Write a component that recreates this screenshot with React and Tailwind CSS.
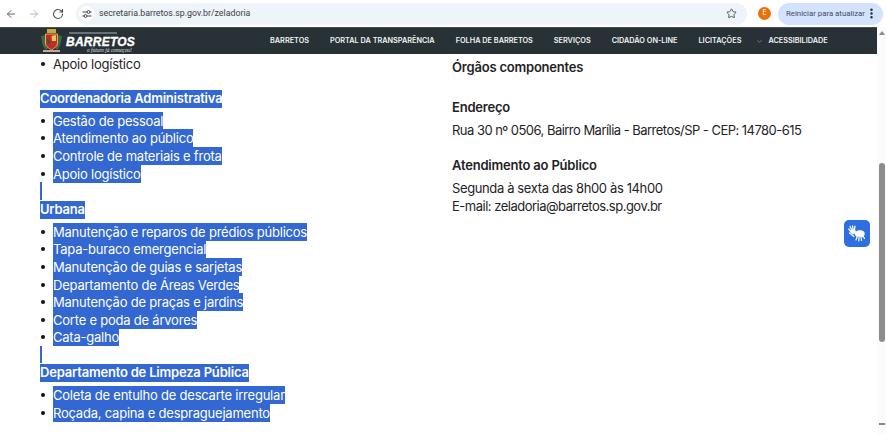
import React from "react";
import { ArrowLeft, ArrowRight, RotateCw, Star, EllipsisVertical, ChevronDown } from "lucide-react";

const font = { fontFamily: '"Inter", "Noto Sans", sans-serif' };

function Sel({ children }) {
  return (
    <div className="h-[17.5px] leading-[17.5px]">
      <span className="inline-block h-[18px] whitespace-nowrap bg-[#3367d1] text-[13px] font-semibold tracking-[-0.2px] text-white">{children}</span>
    </div>
  );
}

function SelList({ items }) {
  return (
    <ul className="flex flex-col">
      {items.map((t) => (
        <li key={t} className="flex h-[17.6px] items-center">
          <span className="ml-[1px] mr-[8px] h-[4px] w-[4px] rounded-full bg-[#111]" />
          <span className="inline-block h-[18px] whitespace-nowrap bg-[#3367d1] text-[13px] leading-[18px] tracking-[-0.22px] text-white">{t}</span>
        </li>
      ))}
    </ul>
  );
}

function Stub({ tall }) {
  return <div className={tall ? "h-[18px] w-[2px] bg-[#3367d1]" : "h-[17px] w-[2px] bg-[#3367d1]"} />;
}

const nav = ["BARRETOS", "PORTAL DA TRANSPARÊNCIA", "FOLHA DE BARRETOS", "SERVIÇOS", "CIDADÃO ON-LINE", "LICITAÇÕES"];

function Logo() {
  return (
    <svg width="94" height="26" viewBox="0 0 94 26" className="block shrink-0">
      <path d="M0 8 C1 12 1 19 5 22 L7 20 L5 7 Z" fill="#3c6a48" />
      <path d="M21 8 C20 12 20 19 16 22 L14 20 L16 7 Z" fill="#3c6a48" />
      <rect x="6" y="1" width="9" height="4" fill="#c9a93f" />
      <path d="M4.5 6 H16.5 V15 C16.5 19 13 20 10.5 22 C8 20 4.5 19 4.5 15 Z" fill="#c9282a" stroke="#d9c25c" strokeWidth="0.9" />
      <path d="M10.5 8 L15 7 V13 H11 Z" fill="#e6c94d" />
      <path d="M6 10 L10 14 L7 17 Z" fill="#2f5a3a" />
      <rect x="2" y="22" width="17" height="2" fill="#c9a6a0" />
      <rect x="28" y="4.5" width="48" height="1" fill="#aeb2b2" />
      <text x="25" y="17.5" fontFamily='"Liberation Sans", sans-serif' fontSize="12" fontWeight="700" fontStyle="italic" fill="#fff" stroke="#fff" strokeWidth="0.35" letterSpacing="0.25">BARRETOS</text>
      <text x="46" y="24" fontFamily='"Liberation Serif", serif' fontSize="5.4" fontStyle="italic" fill="#e2e2e2">o futuro já começou!</text>
    </svg>
  );
}

function Hands() {
  return (
    <svg width="18" height="17" viewBox="0 0 18 17" fill="none" stroke="#fff" strokeLinecap="round">
      <path d="M2 1.5 L4 5 M4.5 0.8 L5.2 4.5 M7 1.2 L6.5 5 M0.8 4 L3 6.5" strokeWidth="1.3" />
      <path d="M3.5 5.5 L7 5 L7.5 8 L4.5 9 L2.5 7 Z" fill="#fff" strokeWidth="0.8" />
      <path d="M1.5 8 L6 11.5" strokeWidth="1.2" />
      <path d="M7.5 7 C10 5 14 5 16 7 C17 9 16 11 14.5 12 L8.5 11.5 C7 10 6.5 8.5 7.5 7 Z" fill="#fff" strokeWidth="0.6" />
      <path d="M9 12 L8 15 M11 12.5 L10.8 16 M13 12.5 L13.6 15.5 M15 11 L16.5 13.5" strokeWidth="1.2" />
    </svg>
  );
}

export default function App() {
  return (
    <div className="relative flex h-[434px] w-[886px] flex-col overflow-hidden bg-white text-[#1f2326]" style={font}>
      {/* browser bar */}
      <div className="flex h-[27px] shrink-0 items-center bg-white">
        <div className="flex w-[76px] items-center pl-[5px] text-[#5f6368]">
          <ArrowLeft size={12} strokeWidth={2} />
          <ArrowRight size={12} strokeWidth={2} className="ml-[11px] text-[#b4b7bb]" />
          <RotateCw size={12} strokeWidth={2.2} className="ml-[12px] text-[#4a4d51]" />
        </div>
        <div className="flex h-[22px] w-[671px] items-center rounded-full bg-[#eff3fa]">
          <div className="ml-[3px] flex h-[15px] w-[15px] items-center justify-center rounded-full bg-white">
            <svg width="10" height="10" viewBox="0 0 10 10" fill="none" stroke="#444" strokeWidth="1">
              <path d="M0.5 3 H5 M8 3 H9.5 M0.5 7 H2 M5 7 H9.5" />
              <circle cx="6.5" cy="3" r="1.4" />
              <circle cx="3.5" cy="7" r="1.4" />
            </svg>
          </div>
          <span className="ml-[5px] text-[8.8px] text-[#3c4043]" style={{ fontFamily: '"Roboto", sans-serif' }}>
            secretaria.barretos.sp.gov.br/zeladoria
          </span>
          <Star size={11} strokeWidth={1.8} className="ml-auto mr-[10px] text-[#3c4043]" />
        </div>
        <div className="ml-[11px] flex h-[13px] w-[13px] items-center justify-center rounded-full bg-[#e8710a] text-[7px] text-white">E</div>
        <div className="ml-[7px] flex h-[22px] w-[105px] items-center rounded-full bg-[#d3e3fd] pl-[8px] text-[#3d4b63]">
          <span className="whitespace-nowrap text-[7.8px]" style={{ fontFamily: '"Roboto", sans-serif' }}>Reiniciar para atualizar</span>
          <EllipsisVertical size={13} strokeWidth={2.6} className="shrink-0 text-[#1f2937]" />
        </div>
      </div>

      <div className="flex min-h-0 flex-1">
        <div className="flex min-w-0 flex-1 flex-col">
          {/* site nav */}
          <div className="flex h-[27px] shrink-0 items-center border-t border-[#4a5053] bg-[#273136] pl-[41px]">
            <Logo />
            <div className="ml-[135px] flex items-center gap-[21px] text-[7.3px] font-semibold text-[#f2f4f4]">
              {nav.map((n) => (
                <span key={n} className="whitespace-nowrap">{n}</span>
              ))}
              <span className="-ml-[6px] flex items-center whitespace-nowrap">
                <ChevronDown size={7} className="mr-[5px] text-[#aab0b3]" />
                ACESSIBILIDADE
              </span>
            </div>
          </div>

          {/* content */}
          <div className="flex min-h-0 flex-1">
            <div className="w-[452px] shrink-0 pl-[40px] pt-[1px]">
              <div className="flex h-[17.6px] items-center pt-[1px] text-[13px] tracking-[-0.22px]">
                <span className="ml-[1px] mr-[8px] h-[4px] w-[4px] rounded-full bg-[#111]" />
                Apoio logístico
              </div>
              <div className="mt-[16px]"><Sel>Coordenadoria Administrativa</Sel></div>
              <div className="mt-[6px]">
                <SelList items={["Gestão de pessoal", "Atendimento ao público", "Controle de materiais e frota", "Apoio logístico"]} />
              </div>
              <Stub tall />
              <Sel>Urbana</Sel>
              <div className="mt-[5px]">
                <SelList items={["Manutenção e reparos de prédios públicos", "Tapa-buraco emergencial", "Manutenção de guias e sarjetas", "Departamento de Áreas Verdes", "Manutenção de praças e jardins", "Corte e poda de árvores", "Cata-galho"]} />
              </div>
              <Stub />
              <Sel>Departamento de Limpeza Pública</Sel>
              <div className="mt-[6px]">
                <SelList items={["Coleta de entulho de descarte irregular", "Roçada, capina e despraguejamento"]} />
              </div>
            </div>
            <div className="flex flex-1 flex-col pt-[4px]">
              <div className="whitespace-nowrap text-[13px] font-semibold leading-[18px] tracking-[-0.2px]">Órgãos componentes</div>
              <div className="mt-[22px] text-[13px] font-semibold leading-[18px] tracking-[-0.2px]">Endereço</div>
              <div className="mt-[5px] whitespace-nowrap text-[13px] leading-[18px] tracking-[-0.53px]">Rua 30 nº 0506, Bairro Marília - Barretos/SP - CEP: 14780-615</div>
              <div className="mt-[17px] whitespace-nowrap text-[13px] font-semibold leading-[18px] tracking-[-0.2px]">Atendimento ao Público</div>
              <div className="mt-[5px] whitespace-nowrap text-[13px] leading-[18px] tracking-[-0.38px]">Segunda à sexta das 8h00 às 14h00</div>
              <div className="whitespace-nowrap text-[13px] leading-[18px] tracking-[-0.5px]">E-mail: zeladoria@barretos.sp.gov.br</div>
            </div>
          </div>
        </div>

        {/* page scrollbar */}
        <div className="flex w-[9px] shrink-0 flex-col items-center bg-[#fbfbfb]">
          <div className="mt-[4px] h-0 w-0 border-x-[3px] border-b-[4px] border-x-transparent border-b-[#8a8a8a]" />
          <div className="mt-[128px] h-[179px] w-[6px] rounded-[3px] bg-[#8c8c8c]" />
          <div className="mt-[81px] h-[2px] w-[6px] bg-[#8a8a8a]" />
        </div>
      </div>

      {/* floating accessibility button */}
      <div className="absolute left-[844px] top-[220px] flex h-[27px] w-[26px] items-center justify-center rounded-[5px] bg-[#2d6fe0]">
        <Hands />
      </div>
    </div>
  );
}
